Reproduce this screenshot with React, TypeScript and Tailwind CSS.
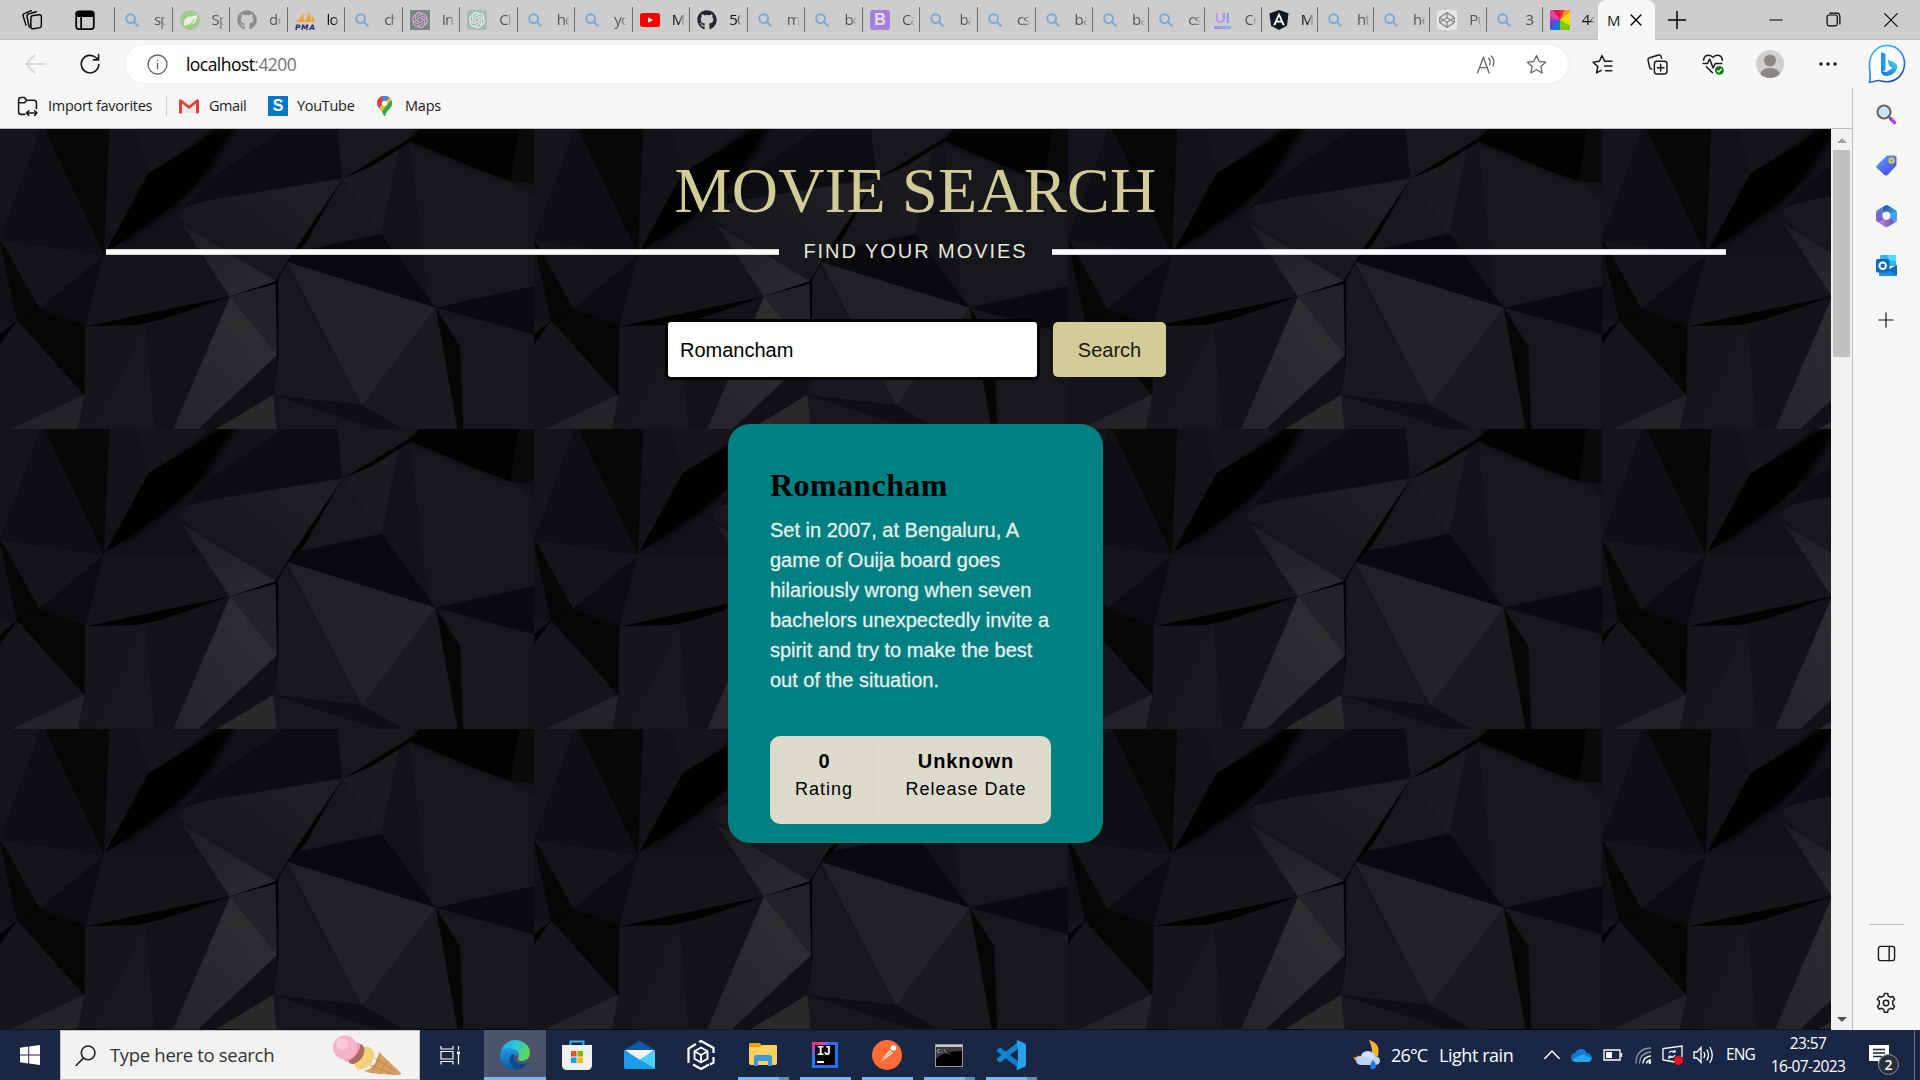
import React from "react";
import { FaGithub, FaCodepen } from "react-icons/fa";
import { SiOpenai } from "react-icons/si";

type P = { children?: React.ReactNode };

/* ---------- small drawing helpers ---------- */
const Line = ({ s = 20, w = 1.5, c = "", children }: P & { s?: number; w?: number; c?: string }) => (
  <svg width={s} height={s} viewBox="0 0 20 20" fill="none" stroke="currentColor" strokeWidth={w} strokeLinecap="round" strokeLinejoin="round" className={"shrink-0 " + c}>
    {children}
  </svg>
);

/* ---------- tab favicons ---------- */
const Find = () => (
  <svg width="14" height="14" viewBox="0 0 14 14" fill="none" stroke="#7fa9d2" strokeWidth="2">
    <circle cx="5.6" cy="5.6" r="4.4" /><path d="M9 9l4.4 4.4" />
  </svg>
);
const Spring = () => (
  <svg width="20" height="20" viewBox="0 0 20 20">
    <circle cx="10" cy="10" r="9.8" fill="#9fcb8c" />
    <path d="M17 4.500c.3 6-2 9.500-6.500 10-2.500.3-4.500.6-6.300 1.300-1-4 .3-8 4.300-9 3.500-.8 6-.3 8.500-2.300z" fill="#e8efe4" />
    <path d="M3.500 17q7-1 11-8" fill="none" stroke="#9fcb8c" strokeWidth="1.200" />
  </svg>
);
const Pma = () => (
  <svg width="20" height="20" viewBox="0 0 20 20">
    <path d="M1 12Q6 9 8 2l1 10zM9 12Q14 6 13 1q3 4 3 11zM16.500 12q1-4 0-7 3 3 3.500 7z" fill="#f6a02d" />
    <text x="0" y="19.500" fontSize="7.500" fontWeight="bold" fontStyle="italic" fontFamily="DejaVu Sans" fill="#2b2b60" textLength="20">PMA</text>
  </svg>
);
const Ai = ({ green }: { green?: boolean }) => (
  <div className={green ? "grid size-5 place-items-center rounded-[3px] bg-[#a3bfb5] text-[#eef4f1]" : "grid size-5 place-items-center bg-[#7c8a7e] text-[#e0a8e2]"}>
    <SiOpenai size={16} />
  </div>
);
const YouTube = () => (
  <svg width="20" height="14" viewBox="0 0 20 14"><rect width="20" height="14" rx="2.500" fill="#f00" /><path d="M8 4.200v5.600L13 7z" fill="#fff" /></svg>
);
const Boot = () => (
  <div className="grid size-5 place-items-center rounded-[3px] bg-[#a97fdc] font-['Liberation_Sans'] text-[16px] font-bold leading-none text-[#e6e0ee]">B</div>
);
const Ui = () => (
  <div className="flex w-[17px] flex-col items-center">
    <span className="bg-gradient-to-r from-[#c79be0] to-[#8d93ea] bg-clip-text font-['Liberation_Sans'] text-[15px] font-bold leading-[13px] text-transparent">UI</span>
    <span className="mt-[2px] h-[3px] w-[17px] bg-gradient-to-r from-[#a78be0] to-[#6cc7dc]" />
  </div>
);
const Angular = () => (
  <svg width="20" height="20" viewBox="0 0 20 20"><path d="M10 0l9.500 3.300-1.500 12.400L10 20l-8-4.300L.5 3.300z" fill="#111722" /><path d="M10 2.500L4.200 15.300h2.200l1.200-2.900h4.800l1.200 2.900h2.200zm0 4l1.700 4.200H8.300z" fill="#fff" /></svg>
);
const Pinwheel = () => (
  <div className="size-5 bg-[conic-gradient(#e8302a_0_25deg,#f7941d_25deg_50deg,#ffd800_50deg_90deg,#d8e000_90deg_120deg,#7ec800_120deg_180deg,#1478d4_180deg_225deg,#5a48d0_225deg_260deg,#a03cc8_260deg_290deg,#f040a0_290deg_325deg,#e01848_325deg)]" />
);
const Pen = () => (
  <div className="grid size-5 place-items-center rounded-[3px] bg-[#e6e6e6] text-[#8d8d8d]"><FaCodepen size={16} /></div>
);

type TabT = { t: string; i?: React.ReactNode; on?: boolean };
const tabsA: TabT[] = [
  { t: "sp" }, { t: "Sp", i: <Spring /> }, { t: "de", i: <FaGithub size={20} color="#8b8d90" /> }, { t: "lo", i: <Pma />, on: true },
  { t: "ch" }, { t: "In", i: <Ai /> }, { t: "Ch", i: <Ai green /> }, { t: "ho" }, { t: "yo" },
  { t: "M", i: <YouTube />, on: true }, { t: "50", i: <FaGithub size={20} color="#24292f" />, on: true },
  { t: "m" }, { t: "bo" }, { t: "Ca", i: <Boot /> }, { t: "ba" }, { t: "cs" }, { t: "ba" },
];
const tabsB: TabT[] = [
  { t: "ba" }, { t: "cs" }, { t: "Co", i: <Ui /> }, { t: "M", i: <Angular />, on: true }, { t: "ht" }, { t: "he" },
  { t: "Pu", i: <Pen /> }, { t: "3" }, { t: "44", i: <Pinwheel />, on: true },
];
const Tab = ({ t, i, on }: TabT) => (
  <div className="flex h-[25px] min-w-0 flex-1 basis-0 items-center border-l border-[#6d6d6d] pl-[7px]">
    <div className="grid w-[20px] shrink-0 place-items-center">{i ?? <Find />}</div>
    <div className={(on ? "text-[#111]" : "text-[#555]") + " ml-[12px] w-[13px] overflow-hidden whitespace-nowrap text-[15px] tracking-[-0.8px] [mask-image:linear-gradient(to_right,black_55%,transparent)]"}>{t}</div>
  </div>
);

const TabStrip = () => (
  <div className="flex h-[40px] items-center border-b border-[#bcbcbc] bg-[#cdcdcd] text-black">
    <div className="flex w-[114px] shrink-0 items-center pl-[21px]">
      <Line s={22} w={1.3}>
        <rect x="9" y="6" width="9.500" height="12" rx="2" transform="skewY(-8) translate(0 1.500)" />
        <path d="M7.500 16.500L5.500 7q-.2-2 1.700-2.600L14 2.500M4.500 14.500L2 6.500Q1.600 4.600 3.500 4L9.500 1.500" />
      </Line>
      <Line s={22} w={1.6} c="ml-[31px]"><rect x="2" y="2.200" width="16" height="16" rx="2.500" /><path d="M2.500 3.500h15v3h-15z" fill="currentColor" /><path d="M6.500 7v11" /></Line>
    </div>
    <div className="flex w-[978px] shrink-0">{tabsA.map((t, n) => <Tab key={n} {...t} />)}</div>
    <div className="flex w-[506px] shrink-0">{tabsB.map((t, n) => <Tab key={n} {...t} />)}</div>
    <div className="flex h-[40px] w-[57px] shrink-0 items-center self-start rounded-t-[8px] bg-[#f7f7f7] pl-[9px]">
      <span className="w-[13px] whitespace-nowrap text-[15px] text-[#222]">M</span>
      <Line s={14} w={2} c="ml-[9px]"><path d="M3 3l14 14M17 3L3 17" /></Line>
    </div>
    <div className="grid w-[44px] place-items-center"><Line s={20} w={1.5}><path d="M10 1.500v17M1.500 10h17" /></Line></div>
    <div className="ml-auto flex">
      <div className="grid w-[58px] place-items-center"><Line s={14} w={1.6} c="ml-[2px]"><path d="M1 10h18" /></Line></div>
      <div className="grid w-[58px] place-items-center"><Line s={15} w={1.6}><rect x="1.500" y="4" width="13.500" height="14.500" rx="2.500" /><path d="M5 1.500h9q4.500 0 4.500 4.500v10" /></Line></div>
      <div className="grid w-[58px] place-items-center"><Line s={14} w={1.6}><path d="M1 1l18 18M19 1L1 19" /></Line></div>
    </div>
  </div>
);

const Star = () => <path d="M10 1.500l2.600 5.600 6.100.7-4.500 4.200 1.200 6.100L10 15l-5.400 3.100 1.200-6.100L1.300 7.800l6.100-.7z" />;

const Bing = () => (
  <svg width="38" height="40" viewBox="0 0 38 40">
    <defs>
      <linearGradient id="bRing" x1="0" y1="0" x2=".6" y2="1"><stop offset="0" stopColor="#2ec6ef" /><stop offset=".5" stopColor="#2b8cf0" /><stop offset="1" stopColor="#1b4fc8" /></linearGradient>
      <linearGradient id="bSwoosh" x1="0" y1="1" x2="1" y2="0"><stop offset="0" stopColor="#1b62d8" /><stop offset="1" stopColor="#40e0e0" /></linearGradient>
    </defs>
    <path d="M19 1.500c10 0 17.500 8 17.500 18S29 37.800 19 37.800c-3 0-5-.8-7.500-1.300-3-.3-6 1.500-10 1.700 1-3.500.7-6 .5-9-.5-3-.8-6-.5-9.700C2 9.500 9.500 1.500 19 1.500z" fill="#fdfdff" stroke="url(#bRing)" strokeWidth="1.600" />
    <path d="M13 8l4.500 1.800v16L13 29z" fill="#2295ef" />
    <path d="M19.500 15.500l7 3q3 1.500 2.800 5Q28 30.500 19 32q-5 0-6-4.500l5.500.5 6-4-3.300-2z" fill="url(#bSwoosh)" />
  </svg>
);

const Toolbar = () => (
  <div className="flex h-[48px] items-center bg-[#f7f7f7]">
    <div className="flex w-[125px] shrink-0 items-center pl-[24px]">
      <Line s={22} w={1.3} c="text-[#cfcfcf]"><path d="M19 10H1.500M9.500 2L1.500 10l8 8" /></Line>
      <Line s={22} w={1.5} c="ml-[33px] text-[#1a1a1a]"><path d="M18 10.500A8 8 0 1 1 15.500 4.300L17.500 6M17.800 1.500V6.200H13" /></Line>
    </div>
    <div className="flex h-[38px] w-[1443px] shrink-0 items-center rounded-full bg-white pl-[22px] shadow-[0_0_3px_rgba(0,0,0,0.08)]">
      <Line s={21} w={1.3} c="text-[#666]"><circle cx="10" cy="10" r="9" /><path d="M10 9v5M10 6v.3" /></Line>
      <div className="ml-[18px] text-[17.500px] tracking-[-0.55px] text-black">localhost<span className="text-[#757575]">:4200</span></div>
      <div className="ml-auto flex items-center pr-[21px] text-[#6b6b6b]">
        <Line s={21} w={1.3}><path d="M1.500 18L7 3l5.500 15M3.300 13h7.500M12 4q2.500 2.500 1 6M14.500 2q4 4 1.800 9.500" /></Line>
        <Line s={21} w={1.3} c="ml-[29px]"><Star /></Line>
      </div>
    </div>
    <div className="ml-[7px] flex items-center text-[#1a1a1a]">
      <div className="grid w-[55px] place-items-center">
        <Line s={21} w={1.4}><path d="M13 7h-.8L9.500 1.500 7 7l-6 .8 4.500 4.200L4.300 18l4.500-2.500M13 7h6M12 11.500h7M13 16h6" /></Line>
      </div>
      <div className="grid w-[55px] place-items-center">
        <Line s={21} w={1.4}><rect x="7" y="7" width="12" height="12" rx="2.500" /><path d="M13 9.800v6.400M9.800 13h6.400M4.500 14.500q-1.500 0-2-2L1 6q-.3-2 1.500-2.500L11 1q2-.3 2.500 1.500l.4 1.500" /></Line>
      </div>
      <div className="grid w-[55px] place-items-center">
        <Line s={22} w={1.4}>
          <path d="M1.500 6.500q.2-4 4-4.500Q8.500 1.800 10 4q1.500-2.200 4.500-2 3.800.5 4 4.500M1 9.500h4l2-4 3 8 2.200-4H18M4 12.500l5.500 5.500" />
          <circle cx="15.800" cy="15.800" r="4" fill="#107c10" stroke="none" /><path d="M14 16l1.300 1.300 2.400-2.600" stroke="#fff" strokeWidth="1.200" />
        </Line>
      </div>
      <div className="grid w-[59px] place-items-center">
        <svg width="28" height="28" viewBox="0 0 28 28"><defs><clipPath id="av"><circle cx="14" cy="14" r="14" /></clipPath></defs><g clipPath="url(#av)"><rect width="28" height="28" fill="#d2d0ce" /><circle cx="14" cy="10.500" r="6" fill="#8c8783" /><ellipse cx="14" cy="25" rx="10" ry="7" fill="#8c8783" /></g></svg>
      </div>
      <div className="grid w-[57px] place-items-center">
        <svg width="18" height="4" viewBox="0 0 18 4" fill="#1a1a1a"><circle cx="2" cy="2" r="1.700" /><circle cx="9" cy="2" r="1.700" /><circle cx="16" cy="2" r="1.700" /></svg>
      </div>
      <div className="grid w-[61px] place-items-center"><Bing /></div>
    </div>
  </div>
);

const Bookmarks = () => (
  <div className="flex h-[41px] shrink-0 items-center border-b border-[#b8bdbb] bg-[#f7f7f7] pb-[4px] pl-[17px] text-[14.5px] text-[#1a1a1a]">
    <Line s={21} w={1.5}><path d="M7.500 17.500H4Q1.500 17.500 1.500 15V4Q1.500 1.500 4 1.500h3L9.500 4H16q2.500 0 2.500 2.500V12M1.500 6.500H7L9.500 4M9 16.200h10M11.200 14L9 16.200l2.200 2.200M16.800 14l2.200 2.200-2.200 2.200" /></Line>
    <span className="ml-[10px] w-[106px] whitespace-nowrap tracking-[-0.28px]">Import favorites</span>
    <span className="ml-[12px] h-[20px] w-px bg-[#cfcfcf]" />
    <svg className="ml-[12px]" width="20" height="15" viewBox="0 0 20 15"><path d="M2 1h16v13H2z" fill="#e9e9e9" /><path d="M0 1.500v12q0 1 1 1h2V4.500l7 5.500 7-5.500v10h2q1 0 1-1v-12Q19-.3 17.500.7L10 6.500 2.500.7Q.8-.3 0 1.500z" fill="#dc4437" /></svg>
    <span className="ml-[10px] w-[40px] tracking-[-0.45px]">Gmail</span>
    <span className="ml-[19px] grid size-5 place-items-center bg-[#0078c8] font-['Liberation_Sans'] text-[16px] font-bold leading-none text-white">S</span>
    <span className="ml-[9px] w-[60px] tracking-[-0.3px]">YouTube</span>
    <svg className="ml-[20px]" width="15" height="20" viewBox="0 0 15 20">
      <defs><clipPath id="pin"><path d="M7.500 0A7.200 7.200 0 0 1 15 7.300c0 5-5.500 6.500-7 12.700h-1C5.500 13.800 0 12.300 0 7.300A7.200 7.200 0 0 1 7.500 0z" /></clipPath></defs>
      <g clipPath="url(#pin)"><path d="M0 0h15v20H0z" fill="#34a853" /><path d="M0 14L13 0h2v6L4 18z" fill="#fbbc04" /><path d="M0 9V0h15L9 5 2 12z" fill="#4285f4" /><path d="M0 0h6L5 7l-4 4-1-3z" fill="#ea4335" /><path d="M9 10l6-7v17H7l-2-4z" fill="#34a853" /></g><circle cx="7.500" cy="7.300" r="2.600" fill="#fff" />
    </svg>
    <span className="ml-[13px] tracking-[-0.2px]">Maps</span>
  </div>
);

/* ---------- faceted dark wallpaper, repeated every 534 x 300 ---------- */
const facets: [string, string][] = [
  ["0,3 125,3 0,335", "#14151a"],
  ["118,3 0,335 303,382 135,3", "#0e0f12"],
  ["130,3 318,3 303,380", "#070708"],
  ["318,3 400,3 432,135 303,382", "#121317"],
  ["398,3 645,3 432,135", "#15161b"],
  ["675,3 825,3 560,190 590,120", "#121317"],
  ["825,3 980,3 995,152 530,240 600,160", "#0c0d10"],
  ["980,3 1225,3 1200,25 995,152", "#17181c"],
  ["335,350 520,230 600,400 303,382", "#111217"],
  ["995,152 620,215 540,235 520,270 800,460 850,370", "url(#fa)"],
  ["995,152 1108,318 920,360 850,380", "#17181c"],
  ["995,152 1160,60 1108,318", "#1b1b1f"],
  ["1160,60 1190,40 1240,540 1108,318", "#121318"],
  ["1190,40 1480,160 1551,180 1551,475 1265,540 1245,500", "#16171b"],
  ["1480,160 1551,165 1551,205", "#111215"],
  ["1505,3 1551,3 1551,165 1480,160", "#0a0a0b"],
  ["300,380 580,380 668,505 245,595", "#141518"],
  ["530,290 668,505 800,460", "url(#fb)"],
  ["1108,318 1265,540 835,403 860,370 920,360", "#09090d"],
  ["835,403 1265,540 1052,832", "url(#fc)"],
  ["825,410 805,470 805,680 793,802 1052,832", "#17181d"],
  ["1265,540 1551,475 1551,620", "#0a0a0e"],
  ["1265,540 1551,620 1551,903 1343,903 1336,655", "#16171b"],
  ["1265,540 1336,655 1345,903 1328,903", "#060607"],
  ["1265,540 1328,903 1165,903 1052,832", "#191a1d"],
  ["793,802 1052,832 1170,903 1090,903", "#0e0f13"],
  ["793,802 1095,903 803,903", "#16171b"],
  ["805,680 793,802 630,903 575,903", "#101115"],
  ["793,802 803,903 630,903", "#2a282b"],
  ["668,505 805,680 575,903 502,903", "url(#fd)"],
  ["668,505 805,462 805,680", "#212226"],
  ["668,505 502,903 446,903 422,598", "#121317"],
  ["245,595 424,598 448,903 225,903 245,800", "#15161a"],
  ["422,598 448,903 280,903", "#17181c"],
  ["0,577 50,577 245,800 35,903 0,903", "#14151a"],
  ["245,800 35,903 225,903", "#222326"],
  ["110,540 50,577 245,800 247,592", "#060607"],
  ["0,340 303,384 115,542", "#141519"],
  ["0,340 0,577 50,577", "#101116"],
  ["0,340 10,350 115,545 50,577", "#060607"],
  ["300,384 247,592 115,542", "#0b0b10"],
  ["50,577 0,620 0,648", "#030304"],
];

const Wallpaper = () => (
  <svg className="absolute inset-0 size-full" aria-hidden>
    <defs>
      <linearGradient id="fa" x1="0" y1=".5" x2=".6" y2="0"><stop offset="0" stopColor="#15161a" /><stop offset="1" stopColor="#1e1f23" /></linearGradient>
      <linearGradient id="fb" x1="0" y1="0" x2=".6" y2="1"><stop offset="0" stopColor="#1c1d20" /><stop offset="1" stopColor="#28292c" /></linearGradient>
      <linearGradient id="fc" x1="0" y1="0" x2="1" y2=".3"><stop offset="0" stopColor="#1f2024" /><stop offset="1" stopColor="#232428" /></linearGradient>
      <linearGradient id="fd" x1="0" y1="1" x2="1" y2="0"><stop offset="0" stopColor="#232427" /><stop offset="1" stopColor="#2f3032" /></linearGradient>
      <filter id="soft" colorInterpolationFilters="sRGB"><feGaussianBlur stdDeviation="9" /></filter>
      <filter id="edge" colorInterpolationFilters="sRGB"><feGaussianBlur stdDeviation="1.500" /></filter>
      <pattern id="rock" width="534" height="300" patternUnits="userSpaceOnUse">
        <svg width="534" height="300" viewBox="0 3 1551 900" preserveAspectRatio="none">
          <rect y="3" width="1551" height="900" fill="#141519" />
          <g filter="url(#edge)">
            {facets.map(([p, f]) => <polygon key={p} points={p} fill={f} stroke={f} strokeWidth="1.500" />)}
          </g>
          <polygon points="640,-10 690,-10 600,140 520,225 350,350 420,180 450,140" fill="#010102" filter="url(#soft)" />
          <polygon points="645,3 672,3 560,180 480,250 335,355 306,372 432,135" fill="#010102" filter="url(#edge)" />
          <polygon points="1195,42 1225,-10 1500,-10 1475,155" fill="#020203" filter="url(#soft)" />
          <polygon points="1190,38 1220,3 1505,3 1482,160 1390,125" fill="#020203" filter="url(#edge)" />
          <g fill="#020203" filter="url(#edge)">
            <polygon points="250,595 668,505 600,530 470,575 400,591" />
            <polygon points="995,152 850,375 800,460 668,505 800,468 835,405 885,350" />
            <polygon points="995,152 1200,25 1215,10 1225,20 1080,115" />
            <polygon points="800,462 808,455 808,680 797,800 805,680" />
          </g>
        </svg>
      </pattern>
    </defs>
    <rect width="100%" height="100%" fill="url(#rock)" />
  </svg>
);

const Page = () => (
  <div className="relative min-w-0 flex-1 overflow-hidden font-['Liberation_Sans',Arial,sans-serif]">
    <Wallpaper />
    <div className="relative flex flex-col items-center">
      <h1 className="mt-[25px] font-['Liberation_Serif',serif] text-[64px] leading-[74px] tracking-[0.3px] text-[#d3cc99]">MOVIE SEARCH</h1>
      <div className="mt-[11px] flex w-[1620px] items-center gap-[24px]">
        <span className="mt-[2px] h-[6px] flex-1 border-y border-[#d5d9d5] bg-[#fafafa]" />
        <span className="text-[20px] leading-[24px] tracking-[1.95px] text-[#e6e6dc]">FIND YOUR MOVIES</span>
        <span className="mt-[2px] h-[6px] flex-1 border-y border-[#d5d5dd] bg-[#fafafa]" />
      </div>
      <div className="mt-[56px] flex items-center gap-[13px] text-[20px]">
        <div className="flex h-[61px] w-[375px] items-center rounded-[6px] border-[3px] border-black bg-white pl-[12px] text-black">Romancham</div>
        <div className="grid h-[55px] w-[113px] place-items-center rounded-[5px] bg-[#d3cc99] text-[#1a1a14]">Search</div>
      </div>
      <article className="mt-[44px] h-[419px] w-[375px] rounded-[22px] bg-[#008080] px-[42px] pt-[42px]">
        <h2 className="font-['Liberation_Serif',serif] text-[32px] font-bold leading-[38px] tracking-[0.4px] text-black">Romancham</h2>
        <p className="mt-[11px] whitespace-nowrap text-[20px] leading-[30px] text-[#e6f0ee] [-webkit-text-stroke:0.3px_#e6f0ee]">
          Set in 2007, at Bengaluru, A<br />game of Ouija board goes<br />hilariously wrong when seven<br />bachelors unexpectedly invite a<br />spirit and try to make the best<br />out of the situation.
        </p>
        <div className="mt-[41px] flex h-[88px] w-[281px] rounded-[10px] bg-[#dddbcb] py-[7px] text-center text-black">
          <div className="w-[109px] border-r border-[#e3e1d3] pt-[4px]">
            <div className="text-[20px] font-bold leading-[28px]">0</div>
            <div className="text-[18px] leading-[28px] tracking-[1px]">Rating</div>
          </div>
          <div className="flex-1 pl-[2px] pt-[4px]">
            <div className="text-[20px] font-bold leading-[28px] tracking-[0.9px]">Unknown</div>
            <div className="text-[18px] leading-[28px] tracking-[1px]">Release Date</div>
          </div>
        </div>
      </article>
    </div>
  </div>
);

const ScrollBar = () => (
  <div className="flex w-[21px] shrink-0 flex-col items-center bg-[#f1f1f1]">
    <svg className="mt-[9px]" width="10" height="5"><path d="M0 5L5 0l5 5z" fill="#a3a3a3" /></svg>
    <div className="mt-[7px] h-[207px] w-[17px] bg-[#c1c1c1]" />
    <svg className="mt-auto mb-[8px]" width="10" height="5"><path d="M0 0l5 5 5-5z" fill="#505050" /></svg>
  </div>
);

const SideBar = () => (
  <aside className="flex w-[68px] shrink-0 flex-col items-center border-l border-[#bdbdbd] bg-[#f7f7f7] pr-[1px] pt-[16px] text-[#1a1a1a]">
    <svg width="21" height="21" viewBox="0 0 21 21"><path d="M15 15l3.500 3.500" stroke="#b83cf5" strokeWidth="3.600" strokeLinecap="round" /><path d="M12 12l3 3" stroke="#555" strokeWidth="2" /><circle cx="8" cy="8" r="6.500" fill="#c9e8fa" stroke="#666" strokeWidth="2.200" /></svg>
    <svg className="mt-[30px]" width="21" height="21" viewBox="0 0 21 21"><defs><linearGradient id="tag" x1="0" y1="0" x2=".7" y2="1"><stop offset="0" stopColor="#62a8ff" /><stop offset="1" stopColor="#4a48f0" /></linearGradient></defs><path d="M11 .5h7q2.500 0 2.500 2.500v7.500l-9 9.500q-1.500 1-3 0L.8 13q-1-1.500 0-2.500z" fill="url(#tag)" /><circle cx="15.500" cy="5.500" r="2.200" fill="#5d7ef5" stroke="#f8d030" strokeWidth="1.800" /></svg>
    <svg className="mt-[29px]" width="21" height="22" viewBox="0 0 21 22">
      <defs>
        <linearGradient id="mA" x1="0" y1="0" x2="0" y2="1"><stop offset="0" stopColor="#4a86d8" /><stop offset="1" stopColor="#8a5cc8" /></linearGradient>
        <linearGradient id="mB" x1="0" y1="0" x2="1" y2="1"><stop offset="0" stopColor="#1d4f9c" /><stop offset="1" stopColor="#4cc4f0" /></linearGradient>
        <linearGradient id="mC" x1="0" y1="0" x2="1" y2="0"><stop offset="0" stopColor="#b78ae0" /><stop offset="1" stopColor="#6f4fae" /></linearGradient>
      </defs>
      <path d="M9 0.500L1.500 5Q0 6 0 7.500v7Q0 16 1.500 17l1.500.8 5.500-3.500Q6.500 13 6.500 11V5Q6.500 2.500 9 .5z" fill="url(#mA)" />
      <path d="M9 .5q1.500-.8 3 0l7.500 4.500Q21 6 21 7.500v6L14.500 10q0-3-4-3.500-2.500 0-4 2V5Q6.500 2 9 .5z" fill="url(#mB)" />
      <path d="M21 10v4.500q0 1.500-1.500 2.500L12 21.500q-1.500.8-3 0L3 17.800q2 .5 4-.800l5-3q2.500-1.500 2.500-4z" fill="#8f68c8" />
      <path d="M21 7.500v6Q21 16 18 17.500l-3.500-2V10L18 7z" fill="#3fa6e8" />
      <path d="M3 17.800l5.500-3.500 2.500 1 4-1.500 3.500 3.700-6.500 4q-1.500.8-3 0z" fill="url(#mC)" />
      <circle cx="10.500" cy="11" r="3.800" fill="#f7f7f7" />
    </svg>
    <svg className="mt-[28px]" width="21" height="21" viewBox="0 0 21 21"><path d="M5 0h14q1 0 1 1v10H4V1z" fill="#32b4f0" /><path d="M12 0h7q1 0 1 1v5h-8z" fill="#50d9ff" /><path d="M3 10l9 5 9-5v10q0 1-1 1H4q-1 0-1-1z" fill="#1490df" /><path d="M12 15l9-5v10z" fill="#0f6cbd" /><rect y="4" width="13.500" height="13.500" rx="1.500" fill="#0f6cbd" /><circle cx="6.700" cy="10.700" r="3.300" fill="none" stroke="#fff" strokeWidth="2" /></svg>
    <Line s={16} w={1.5} c="mt-[36px]"><path d="M10 1v18M1 10h18" /></Line>
    <div className="mt-auto h-px w-[35px] bg-[#bdbdbd]" />
    <Line s={19} w={1.5} c="mt-[19px]"><rect x="1.500" y="2.500" width="17" height="15" rx="2.500" /><path d="M12.800 2.500v15" /></Line>
    <svg className="mt-[29px] mb-[16px]" width="22" height="22" viewBox="0 0 24 24" fill="none" stroke="currentColor" strokeWidth="1.600" strokeLinejoin="round"><path d="M9.700 4.200L10.200 1.500h3.600l.5 2.700 2.600 1.500 2.600-.9 1.900 3.200-2.100 1.800v3.900l2.100 1.800-1.900 3.200-2.600-.9-2.600 1.500-.5 2.700h-3.600l-.5-2.700-2.600-1.500-2.600.9-1.900-3.200 2.100-1.800V9.800L2.600 8l1.900-3.200 2.600.9z" /><circle cx="12" cy="12" r="3" /></svg>
  </aside>
);

/* ---------- taskbar ---------- */
const Cone = () => (
  <svg width="70" height="40" viewBox="0 0 70 40">
    <path d="M32 36q12-3 15-19l22 21q0 2-2 2l-20-1q-8 0-15-3z" fill="#d9a066" /><path d="M38 30l25 10M43 23l20 13M40 38l8-18M48 39l6-12M56 39l4-7" stroke="#b97c44" strokeWidth=".8" />
    <ellipse cx="32" cy="23" rx="12" ry="9" fill="#f3d27c" transform="rotate(-55 32 23)" /><path d="M23 29l3 8 2-7z" fill="#f3d27c" />
    <ellipse cx="24" cy="19" rx="11" ry="7" fill="#a86c5a" transform="rotate(-55 24 19)" />
    <ellipse cx="20" cy="17" rx="11.500" ry="5" fill="#ee9db8" transform="rotate(-50 20 17)" />
    <circle cx="13" cy="12.500" r="12" fill="#f7b3cc" /><circle cx="10" cy="9" r="6" fill="#fbcadb" />
  </svg>
);
const Edge = () => (
  <svg width="30" height="30" viewBox="0 0 30 30">
    <defs><linearGradient id="e1" x1="0" y1=".2" x2="1" y2=".5"><stop offset="0" stopColor="#25a7e0" /><stop offset=".5" stopColor="#2fc3d8" /><stop offset="1" stopColor="#5fd94a" /></linearGradient><linearGradient id="e2" x1="0" y1="0" x2="0" y2="1"><stop offset="0" stopColor="#1b9de2" /><stop offset="1" stopColor="#0c59a4" /></linearGradient></defs>
    <path d="M.5 13C2 5 8 0 15 0c9 0 15 6 15 13 0 5-4 8-8 8-3 0-5-1-4-3 2-3 0-8-6-9C7 8.500 2 10 .5 13z" fill="url(#e1)" />
    <path d="M0 15C1 9 7 7.500 11 8.500c5 1 7.500 5 7 8-4-2-7.500 1-7 5 .5 4 4 8 8 8C9 32-1 25 0 15z" fill="url(#e2)" />
    <path d="M11 15c-3 5-1 13 8 14.500 4-1 7.500-4 9-7-5 3-12 1.500-14-3-.8-2-.3-4 1-5q-3-1-4 .5z" fill="#114a8b" />
  </svg>
);
const Store = () => (
  <svg width="30" height="30" viewBox="0 0 30 30"><path d="M8.500 6V1.500h13V6" fill="none" stroke="#30b4f0" strokeWidth="2" /><path d="M0 5h30v20q0 5-5 5H5q-5 0-5-5z" fill="#f0f0f0" /><path d="M9 11h5.500v5.500H9z" fill="#f25022" /><path d="M15.500 11H21v5.500h-5.500z" fill="#7fba00" /><path d="M9 17.500h5.500V23H9z" fill="#00a4ef" /><path d="M15.500 17.500H21V23h-5.500z" fill="#ffb900" /></svg>
);
const Mail = () => (
  <svg width="31" height="28" viewBox="0 0 31 28"><path d="M0 9L15.500 0 31 9v5H0z" fill="#0c59a8" /><path d="M1 9h29L15.500 20z" fill="#f3f3f3" /><path d="M0 9l31 19H2q-2 0-2-2z" fill="#1b9de8" /><path d="M31 9L15.500 18.500 31 28z" fill="#4cd0fb" /></svg>
);
const HexCube = () => (
  <svg width="28" height="30" viewBox="0 0 28 30" fill="none" stroke="#fff" strokeWidth="2.200">
    <path d="M1.500 23V8.500L9 4M12 2l2-1 12.500 7v5M26.500 17v5.500L23 24.500M6 24.500l8 4.500 8-4.500" />
    <path d="M14 7.500l6.500 3.700v7.600L14 22.500l-6.500-3.700v-7.600zM7.500 11.200L14 15l6.500-3.800M14 15v7.500" strokeWidth="1.900" />
  </svg>
);
const Folder = () => (
  <svg width="28" height="24" viewBox="0 0 28 24"><path d="M0 1q0-1 1-1h10l2 3v4H0z" fill="#e8a50e" /><path d="M0 4h11l2-2h14q1 0 1 1v17q0 2-2 2H2q-2 0-2-2z" fill="#fbd05e" /><path d="M5 14q0-2 2-2h14q2 0 2 2v9h-4v-5H9v5H5z" fill="#3b97df" /></svg>
);
const Idea = () => (
  <div className="grid size-[26px] place-items-center bg-[conic-gradient(from_20deg,#2b6fe8,#087cfa_25%,#3a60e0_45%,#1488f8_65%,#8a50c8_75%,#fe315d_85%,#b74af7_95%,#2b6fe8)]">
    <div className="size-[20px] bg-black pl-[2px] pt-px font-['Liberation_Mono'] text-[12px] font-bold leading-[12px] tracking-[-0.5px] text-white">IJ<div className="mt-[3px] h-[1.5px] w-[7px] bg-white" /></div>
  </div>
);
const Postman = () => (
  <svg width="30" height="30" viewBox="0 0 30 30"><circle cx="15" cy="15" r="15" fill="#ff6c37" /><path d="M7 23L17.500 10l3.500 3L10.500 21z" fill="#f6e3dc" /><circle cx="21.500" cy="8" r="2.800" fill="#fff" /><path d="M7 23l12-11" stroke="#ff6c37" strokeWidth=".8" /></svg>
);
const Cmd = () => (
  <svg width="28" height="23" viewBox="0 0 28 23"><rect x=".5" y=".5" width="27" height="22" fill="#000" stroke="#9a9a9a" /><path d="M1 1h26v2H1z" fill="#c5c9cc" /><path d="M1 3h26v4Q8 7 1 15z" fill="#3b3b3b" /><text x="2" y="8.500" fontSize="5.500" fontFamily="Liberation Mono" fill="#ddd">C:\_</text></svg>
);
const Code = () => (
  <svg width="30" height="30" viewBox="0 0 30 30"><path d="M1 10l2-2q1-.8 2 0l18 14v6.500L.8 11.500z" fill="#0f7fc8" /><path d="M1 20l2 2q1 .8 2 0L23 8V1.500L.8 18.500z" fill="#1485d0" /><path d="M22 .3L29 3.500q1 .5 1 1.500v20q0 1-1 1.500L22 29.700q-1 .4-1.500-.5L22 22V8L20.500.8Q21-.2 22 .3z" fill="#26a3f0" /></svg>
);

const TaskButton = ({ children, open, more, active }: P & { open?: boolean; more?: boolean; active?: boolean }) => (
  <div className={(active ? "bg-[#4a546b]" : "") + " relative grid h-[50px] w-[62px] place-items-center"}>
    {children}
    {active && <span className="absolute inset-x-0 bottom-0 h-[3px] bg-[#78b8f0]" />}
    {open && <span className={(more ? "border-r-[10px] border-[#5f8fbc] " : "") + "absolute bottom-0 left-[6px] h-[3px] w-[51px] bg-[#78b8f0]"} />}
  </div>
);

const Tray = () => (
  <div className="ml-auto flex h-[50px] items-center text-white">
    <svg width="29" height="30" viewBox="0 0 29 30"><path d="M16 0q12 3 9 16l-6 2Q20 8 16 0z" fill="#f3b52e" /><path d="M0 17q4 1 5-2l3 5-5 1z" fill="#f09a28" /><path d="M9 25q-6 0-6-5 .5-4 5-4 1-5 7-5 6 .5 7 5 5 .5 5 5-.5 4-5 4z" fill="#bcd3f7" /><path d="M9 16q3-5 8-3t4 6" fill="#d7e5fb" /><path d="M20 20q4 4 2.500 8-3 3-5 0-1-4 2.500-8z" fill="#1f7ae8" /></svg>
    <span className="ml-[9px] w-[48px] whitespace-nowrap text-[18px] tracking-[-0.85px]">26°C</span>
    <span className="w-[105px] whitespace-nowrap text-[18px] tracking-[-0.45px]">Light rain</span>
    <Line s={16} w={1.8}><path d="M1 14.500L10 5l9 9.500" /></Line>
    <svg className="ml-[11px]" width="21" height="13" viewBox="0 0 21 13"><path d="M5 13q-5-.5-5-5 .5-3.500 4-4Q6 0 10.500 0q4 .2 5.500 4 4.500.5 5 5-.5 3.500-4 4z" fill="#0f78d4" /><path d="M4 13q-2-.5-3-2l9-5q2-1 4 0l6.500 3.500q-.5 3-3.500 3.500z" fill="#28a8ea" /></svg>
    <svg className="ml-[11px]" width="20" height="12" viewBox="0 0 20 12" fill="none" stroke="#fff" strokeWidth="1.300"><path d="M1 1h16v10H1zM18.500 4v4" /><path d="M3 3h6v6H3z" fill="#fff" stroke="none" /></svg>
    <svg className="ml-[12px]" width="17" height="17" viewBox="0 0 17 17" fill="none" strokeWidth="1.300" strokeLinecap="round"><g stroke="#8e97a8"><path d="M1 16Q1 2 15.500 1" /><path d="M4.500 16Q5 6 15.500 5" /></g><path d="M8 16q.5-6 7.500-7M11.500 16q.5-2.500 4-3" stroke="#fff" /><circle cx="14.800" cy="15.500" r="1.400" fill="#fff" /></svg>
    <svg className="ml-[10px]" width="22" height="20" viewBox="0 0 22 20" fill="none" stroke="#fff" strokeWidth="1.300"><path d="M13 17L1 15V3.500L20 1v11" /><path d="M7 8q2-3 6-1V5M13 7h-2.500M13 10q-2 3.500-6 1.500V14M7 11.500h2.500" /><circle cx="16.500" cy="15.500" r="4.500" fill="#e81123" stroke="none" /></svg>
    <svg className="ml-[9px]" width="22" height="18" viewBox="0 0 22 18" fill="none" stroke="#fff" strokeWidth="1.300" strokeLinecap="round"><path d="M1 6h3l4-4.500v15L4 12H1zM11 6.500q1.500 2.500 0 5M14 4q3 5 0 10M17 1.500q4.500 7.500 0 15" /></svg>
    <span className="ml-[11px] w-[29px] whitespace-nowrap text-[15.5px] tracking-[-0.9px]">ENG</span>
    <div className="ml-[9px] flex w-[88px] flex-col items-center whitespace-nowrap text-[15.5px] leading-[23px] tracking-[-0.65px]"><span>23:57</span><span>16-07-2023</span></div>
    <div className="relative ml-[17px] h-[20px] w-[45px]">
      <svg width="20" height="20" viewBox="0 0 20 20"><path d="M0 0h20v16H13l-4 4v-4H0z" fill="#fff" /><path d="M4 4.500h12M4 8h12M4 11.500h9" stroke="#1b2742" strokeWidth="1.300" /></svg>
      <span className="absolute left-[9px] top-[9px] grid size-[21px] place-items-center rounded-full border border-[#888f9c] bg-[#2b2f38] text-[14px] font-semibold leading-none">2</span>
    </div>
    <span className="h-full w-px bg-[#6b7486]" /><span className="w-[5px]" />
  </div>
);

const TaskBar = () => (
  <div className="flex h-[50px] shrink-0 bg-[#1a2744]">
    <div className="grid w-[60px] place-items-center">
      <svg width="20" height="20" viewBox="0 0 20 20" fill="#fff"><path d="M0 2.800L8.200 1.600v7.900H0zM9.200 1.500L20 0v9.500H9.200zM0 10.500h8.200v7.900L0 17.200zM9.200 10.500H20V20L9.200 18.500z" /></svg>
    </div>
    <div className="flex w-[360px] items-center border border-[#c2c2c2] bg-[#f2f2f2] pl-[14px]">
      <Line s={21} w={1.5} c="text-[#222]"><circle cx="12.500" cy="7.500" r="6.500" /><path d="M8 12.500L1 19.500" /></Line>
      <span className="ml-[14px] whitespace-nowrap text-[18.5px] tracking-[-0.32px] text-[#333]">Type here to search</span>
      <span className="ml-auto mr-[17px]"><Cone /></span>
    </div>
    <div className="grid w-[64px] place-items-center pr-[4px]">
      <svg width="20" height="20" viewBox="0 0 20 20" fill="none" stroke="#fff" strokeWidth="1.200"><path d="M1 1v3h12V1M1 6.500h12v7.500H1zM1 19.500v-3h12v3M18.500 1v4M18.500 10v9.500" /><path d="M17 6.500h3v3h-3z" fill="#fff" stroke="none" /></svg>
    </div>
    <TaskButton active><Edge /></TaskButton>
    <TaskButton><Store /></TaskButton>
    <TaskButton><Mail /></TaskButton>
    <TaskButton><HexCube /></TaskButton>
    <TaskButton open more><Folder /></TaskButton>
    <TaskButton open><Idea /></TaskButton>
    <TaskButton open><Postman /></TaskButton>
    <TaskButton open more><Cmd /></TaskButton>
    <TaskButton open more><Code /></TaskButton>
    <Tray />
  </div>
);

export default function App() {
  return (
    <div className="flex h-[1080px] w-[1920px] flex-col overflow-hidden bg-[#f7f7f7] font-['Open_Sans','Noto_Sans',sans-serif]">
      <TabStrip />
      <Toolbar />
      <div className="flex min-h-0 flex-1">
        <div className="flex w-[1852px] shrink-0 flex-col">
          <Bookmarks />
          <div className="flex min-h-0 flex-1">
            <Page />
            <ScrollBar />
          </div>
        </div>
        <SideBar />
      </div>
      <TaskBar />
    </div>
  );
}
